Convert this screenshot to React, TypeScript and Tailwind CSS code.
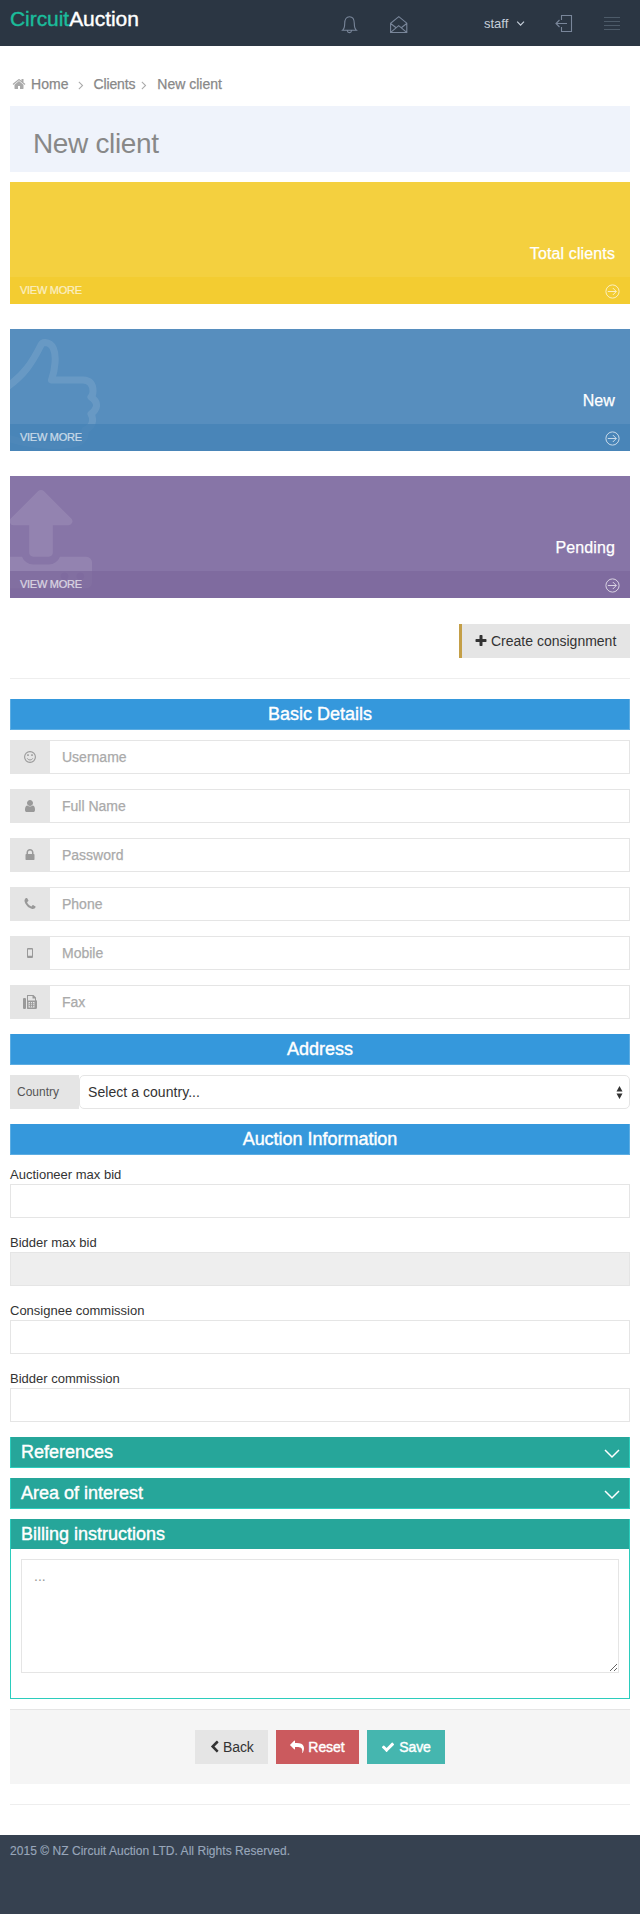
import type { ReactNode } from "react";

const glyphs = {
  home: "M1472 992v480q0 26-19 45t-45 19h-384v-384h-256v384h-384q-26 0-45-19t-19-45v-480q0-1 .5-3t.5-3l575-474 575 474q1 2 1 6zm223-69l-62 74q-8 9-21 11h-3q-13 0-21-7l-692-577-692 577q-12 8-24 7-13-2-21-11l-62-74q-8-10-7-23.5t11-21.5l719-599q32-26 76-26t76 26l244 204v-195q0-14 9-23t23-9h192q14 0 23 9t9 23v408l219 182q10 8 11 21.5t-7 23.5z",
  user: "M1536 1399q0 109-62.5 187t-150.5 78h-854q-88 0-150.5-78t-62.5-187q0-85 8.5-160.5t31.5-152 58.5-131 94-89 134.5-34.5q131 128 313 128t313-128q76 0 134.5 34.5t94 89 58.5 131 31.5 152 8.5 160.5zm-256-887q0 159-112.5 271.5t-271.5 112.5-271.5-112.5-112.5-271.5 112.5-271.5 271.5-112.5 271.5 112.5 112.5 271.5z",
  lock: "M640 768h512v-192q0-106-75-181t-181-75-181 75-75 181v192zm832 96v576q0 40-28 68t-68 28h-960q-40 0-68-28t-28-68v-576q0-40 28-68t68-28h32v-192q0-184 132-316t316-132 316 132 132 316v192h32q40 0 68 28t28 68z",
  phone: "M1600 1240q0 27-10 70.5t-21 68.5q-21 50-122 106-94 51-186 51-27 0-53-3.5t-57.5-12.5-47-14.5-55.5-20.5-49-18q-98-35-175-83-127-79-264-216t-216-264q-48-77-83-175-3-9-18-49t-20.5-55.5-14.5-47-12.5-57.5-3.5-53q0-92 51-186 56-101 106-122 25-11 68.5-21t70.5-10q14 0 21 3 18 6 53 76 11 19 30 54t35 63.5 31 53.5q3 4 17.5 25t21.5 35.5 7 28.5q0 20-28.5 50t-62 55-62 53-28.5 46q0 9 5 22.5t8.5 20.5 14 24 11.5 19q76 137 174 235t235 174q2 1 19 11.5t24 14 20.5 8.5 22.5 5q18 0 46-28.5t53-62 55-62 50-28.5q14 0 28.5 7t35.5 21.5 25 17.5q25 15 53.5 31t63.5 35 54 30q70 35 76 53 3 7 3 21z",
  upload: "M1344 1472q0-26-19-45t-45-19-45 19-19 45 19 45 45 19 45-19 19-45zm256 0q0-26-19-45t-45-19-45 19-19 45 19 45 45 19 45-19 19-45zm128-224v320q0 40-28 68t-68 28h-1472q-40 0-68-28t-28-68v-320q0-40 28-68t68-28h427q21 56 70.5 92t110.5 36h256q61 0 110.5-36t70.5-92h427q40 0 68 28t28 68zm-325-648q-17 40-59 40h-256v448q0 26-19 45t-45 19h-256q-26 0-45-19t-19-45v-448h-256q-42 0-59-40-17-39 14-69l448-448q18-19 45-19t45 19l448 448q31 30 14 69z",
  check: "M1671 566q0 40-28 68l-724 724-136 136q-28 28-68 28t-68-28l-136-136-362-362q-28-28-28-68t28-68l136-136q28-28 68-28t68 28l294 295 656-657q28-28 68-28t68 28l136 136q28 28 28 68z",
  plus: "M1600 736v192q0 40-28 68t-68 28h-416v416q0 40-28 68t-68 28h-192q-40 0-68-28t-28-68v-416h-416q-40 0-68-28t-28-68v-192q0-40 28-68t68-28h416v-416q0-40 28-68t68-28h192q40 0 68 28t28 68v416h416q40 0 68 28t28 68z",
  share: "M1792 640q0 26-19 45l-512 512q-19 19-45 19t-45-19-19-45v-256h-224q-98 0-175.5 6t-154 21.5-133 42.5-105.5 69.5-80 101-48.5 138.5-17.5 181q0 55 5 123 0 6 2.5 23.5t2.5 26.5q0 15-8.5 25t-23.5 10q-16 0-28-17-7-9-13-22t-13.5-30-10.5-24q-127-285-127-451 0-199 53-333 162-403 875-403h224v-256q0-26 19-45t45-19 45 19l512 512q19 19 19 45z",
  left: "M1427 301l-531 531 531 531q19 19 19 45t-19 45l-166 166q-19 19-45 19t-45-19l-742-742q-19-19-19-45t19-45l742-742q19-19 45-19t45 19l166 166q19 19 19 45t-19 45z",
  angle: "M1171 960q0 13-10 23l-466 466q-10 10-23 10t-23-10l-50-50q-10-10-10-23t10-23l393-393-393-393q-10-10-10-23t10-23l50-50q10-10 23-10t23 10l466 466q10 10 10 23z",
};

function Glyph({ name, className }: { name: keyof typeof glyphs; className: string }) {
  return (
    <svg viewBox="0 0 1792 1792" fill="currentColor" className={className}>
      <path d={glyphs[name]} />
    </svg>
  );
}

function Header() {
  return (
    <header className="flex h-[46px] items-start bg-[#2b3643] pl-[10px]">
      <div className="mt-[7px] w-[329px] text-[21px] leading-6 tracking-[-0.05px] text-white [-webkit-text-stroke:0.4px_currentColor]">
        <span className="text-[#1bbc9b]">Circuit</span>Auction
      </div>
      <svg className="mt-[15px] h-[19px] w-[20px] text-[#79869a]" viewBox="0 0 20 19" fill="none" stroke="currentColor" strokeWidth="1.1">
        <path d="M3.5 15.3h14c-1.8-1.5-2.2-3-2.2-6.8C15.3 4.500 13.500 1.700 10.500 1.700S5.700 4.500 5.700 8.500c0 3.800-.4 5.300-2.200 6.800zM8.200 15.500c.2 1.400 1 2.100 2.200 2.100s2-.7 2.200-2.100" />
      </svg>
      <svg className="mt-[15px] ml-[30px] h-[19px] w-[20px] text-[#79869a]" viewBox="0 0 20 19" fill="none" stroke="currentColor" strokeWidth="1.100">
        <path d="M1.600 17.500V8.200L9.800 1.600l8 6.600v9.300zM1.700 8.500l5.100 4M17.700 8.500l-5.100 4M1.700 17.300l8-6.600 8 6.600" />
      </svg>
      <div className="mt-[14px] ml-[75px] w-[32px] text-[13px] leading-[20px] text-[#c6cfda]">staff</div>
      <svg className="mt-[20px] h-[7px] w-[9px] text-[#c6cfda]" viewBox="0 0 9 7" fill="none" stroke="currentColor" strokeWidth="1.200">
        <path d="M1.200 1.700l3.400 3.400L8 1.700" />
      </svg>
      <svg className="mt-[14px] mr-px ml-[29px] h-[19px] w-[19px] text-[#79869a]" viewBox="0 0 19 19" fill="none" stroke="currentColor" strokeWidth="1.100">
        <path d="M7.500 6V1.500h10v16h-10V13M13 9.500H2M5.500 6L2 9.500 5.500 13" />
      </svg>
      <svg className="mt-[16px] ml-[30px] h-[15px] w-[16px] text-[#4d5b69]" viewBox="0 0 16 15" stroke="currentColor">
        <path d="M0 1.500h16M0 5.500h16M0 9.500h16M0 13.500h16" />
      </svg>
    </header>
  );
}

function Thumb() {
  return (
    <svg className="absolute top-0 left-0 h-[122px] w-[100px] opacity-10" viewBox="0 0 100 122" fill="none" stroke="white" strokeWidth="7" strokeLinejoin="round">
      <path d="M-3 58C14 46 22 34 31 16Q32 13.500 35 13.500C43 14 46 22 45 34Q44.500 42 41.500 51H73Q83 51.500 83 62Q83 66 81 68Q87 72 86.500 77Q86 81 81 85Q83 88 82.500 92Q82 98 75 101Q76 108 71 112Q64 116.500 42 116.500Q18 116 -3 109" />
    </svg>
  );
}

function StatCard({ title, body, foot, art }: { title: string; body: string; foot: string; art?: ReactNode }) {
  return (
    <div className={`relative mb-[25px] flex h-[122px] flex-col overflow-hidden text-white ${body}`}>
      {art}
      <div className="mt-[62px] h-[33px] pr-[15px] text-right text-[16px] leading-5 tracking-[0.12px] [-webkit-text-stroke:0.25px_currentColor]">
        {title}
      </div>
      <div className={`relative flex h-[27px] items-center justify-between px-[10px] ${foot}`}>
        <span className="text-[11px] tracking-[-0.27px] opacity-70 [-webkit-text-stroke:0.2px_currentColor]">VIEW MORE</span>
        <svg className="mt-px h-[15px] w-[15px] opacity-70" viewBox="0 0 15 15" fill="none" stroke="currentColor" strokeWidth="1">
          <circle cx="7.500" cy="7.500" r="6.600" />
          <path d="M2.800 7.500h8.500M7.800 4l3.500 3.500L7.800 11" />
        </svg>
      </div>
    </div>
  );
}

function BlueBar({ children }: { children: ReactNode }) {
  return (
    <div className="mb-[10px] h-[31px] border border-t-0 border-[#5dade2] bg-[#3598dc] text-center text-[18px] leading-[30px] tracking-[-0.02px] text-white [-webkit-text-stroke:0.4px_currentColor]">
      {children}
    </div>
  );
}

function IconField({ icon, label }: { icon: ReactNode; label: string }) {
  return (
    <div className="mb-[15px] flex h-[34px]">
      <div className="flex w-[40px] items-center justify-center bg-[#e5e5e5] text-[#999]">{icon}</div>
      <input
        placeholder={label}
        className="min-w-0 flex-1 border border-l-0 border-[#e5e5e5] px-3 text-[14px] placeholder:text-[#aaa] placeholder:[-webkit-text-stroke:0.25px_#aaa]"
      />
    </div>
  );
}

function NumberField({ label, disabled }: { label: string; disabled?: boolean }) {
  return (
    <div className="mb-[15px]">
      <div className="h-[19px] text-[13px] leading-[19px]">{label}</div>
      <input
        aria-label={label}
        disabled={disabled}
        className="block h-[34px] w-full border border-[#e5e5e5] bg-white px-3 text-[14px] disabled:bg-[#eee]"
      />
    </div>
  );
}

function GreenBar({ children }: { children: string }) {
  return (
    <div className="mb-[10px] flex h-[31px] items-center justify-between border border-t-0 border-[#2bcdbd] bg-[#26a69a] px-[10px] text-[18px] leading-[30px] text-white [-webkit-text-stroke:0.4px_currentColor]">
      <span>{children}</span>
      <svg className="mt-[3px] mr-[-1px] h-[10px] w-[16px]" viewBox="0 0 16 10" fill="none" stroke="currentColor" strokeWidth="1.500">
        <path d="M1 1L8 8l7-7" />
      </svg>
    </div>
  );
}

function Smile() {
  return (
    <svg className="h-[12px] w-[12px]" viewBox="0 0 12 12" fill="none" stroke="currentColor">
      <circle cx="6" cy="6" r="5.400" strokeWidth="1.100" />
      <path d="M3.200 7.300Q4 9 6 9t2.800-1.700" />
      <path d="M4 3.200v1.700M8 3.200v1.700" strokeWidth="1.500" />
    </svg>
  );
}

function Mobile() {
  return (
    <svg className="h-[10px] w-[6px]" viewBox="0 0 6 10">
      <path fill="currentColor" fillRule="evenodd" d="M1 0h4q1 0 1 1v8q0 1-1 1H1Q0 10 0 9V1Q0 0 1 0zM1 1.500v6.300h4V1.500z" />
    </svg>
  );
}

function Fax() {
  return (
    <svg className="h-[14px] w-[14px]" viewBox="0 0 14 14">
      <rect x="0" y="3" width="3" height="11" rx="1" fill="currentColor" />
      <path fill="currentColor" fillRule="evenodd" d="M4 0h6.500L13 2.500V5q1 .3 1 1.300v6.200q0 1.500-1.500 1.500H4.500Q4 14 4 13zM5 1v4.500h7V3.500H9.500V1zM5.500 7v5.500h6V7z" />
      <path stroke="currentColor" strokeWidth=".9" d="M7.500 7v5.500M9.500 7v5.500M5.500 8.800h6M5.500 10.700h6" />
    </svg>
  );
}

export default function App() {
  return (
    <div className="flex h-[1914px] w-[640px] flex-col bg-white font-['Liberation_Sans',Arial,sans-serif] text-[#333]">
      <Header />
      <main className="flex-1 px-[10px]">
        <nav className="flex h-[60px] items-center pt-[17px] text-[14px] text-[#888] [-webkit-text-stroke:0.25px_currentColor]">
          <Glyph name="home" className="mt-[-2px] ml-[2px] h-[14px] w-[14px] text-[#aaa]" />
          <span className="ml-[5px] tracking-[0.05px]">Home</span>
          <Glyph name="angle" className="ml-[5px] h-[14px] w-[14px] text-[#aaa]" />
          <span className="ml-[6px] tracking-[-0.15px]">Clients</span>
          <Glyph name="angle" className="ml-[2px] h-[14px] w-[14px] text-[#aaa]" />
          <span className="ml-[6px]">New client</span>
        </nav>
        <h1 className="mb-[10px] h-[66px] bg-[#eff3fb] pt-[5px] pl-[23px] text-[28px] leading-[66px] tracking-[-0.35px] text-[#888]">New client</h1>

        <StatCard title="Total clients" body="bg-[#f4d03f]" foot="bg-[#f3cc31]" />
        <StatCard title="New" body="bg-[#578ebe]" foot="bg-[#4482b5]/75" art={<Thumb />} />
        <StatCard
          title="Pending"
          body="bg-[#8775a7]"
          foot="bg-[#7c689c]/75"
          art={<Glyph name="upload" className="absolute top-[10px] left-[-24px] h-[110px] w-[110px] opacity-10" />}
        />

        <div className="mt-[26px] flex justify-end">
          <button className="flex h-[34px] w-[171px] items-center border-l-[3px] border-[#c49f47] bg-[#e5e5e5] pl-[12px] text-[14px] whitespace-nowrap">
            <Glyph name="plus" className="mr-[3px] h-[14px] w-[14px]" />
            Create consignment
          </button>
        </div>
        <hr className="mt-[20px] mb-[20px] border-[#eee]" />

        <BlueBar>Basic Details</BlueBar>
        <IconField icon={<Smile />} label="Username" />
        <IconField icon={<Glyph name="user" className="h-[14px] w-[14px]" />} label="Full Name" />
        <IconField icon={<Glyph name="lock" className="h-[14px] w-[14px]" />} label="Password" />
        <IconField icon={<Glyph name="phone" className="h-[14px] w-[14px]" />} label="Phone" />
        <IconField icon={<Mobile />} label="Mobile" />
        <IconField icon={<Fax />} label="Fax" />

        <BlueBar>Address</BlueBar>
        <div className="mb-[15px] flex h-[34px]">
          <div className="flex w-[69px] items-center bg-[#e5e5e5] pl-[7px] text-[12px] text-[#555]">Country</div>
          <div className="flex flex-1 items-center justify-between rounded-[5px] border border-[#e5e5e5] pr-[6px] pl-[8px] text-[14px]">
            <span className="tracking-[0.05px]">Select a country...</span>
            <svg className="h-[13px] w-[7px]" viewBox="0 0 7 13" fill="currentColor">
              <path d="M3.500 0L6.500 5.500h-6zM3.500 13L6.500 7.500h-6z" />
            </svg>
          </div>
        </div>

        <BlueBar>Auction Information</BlueBar>
        <NumberField label="Auctioneer max bid" />
        <NumberField label="Bidder max bid" disabled />
        <NumberField label="Consignee commission" />
        <NumberField label="Bidder commission" />

        <GreenBar>References</GreenBar>
        <GreenBar>Area of interest</GreenBar>
        <section className="mb-[10px] h-[180px] border border-t-0 border-[#2bcdbd]">
          <h2 className="h-[30px] bg-[#26a69a] px-[10px] text-[18px] leading-[30px] text-white [-webkit-text-stroke:0.4px_currentColor]">
            Billing instructions
          </h2>
          <div className="px-[10px] pt-[10px]">
            <textarea
              placeholder="..."
              className="block h-[114px] w-full border border-[#e5e5e5] px-3 py-[6px] text-[14px] leading-5 placeholder:text-[#999]"
            />
          </div>
        </section>

        <div className="flex h-[75px] justify-center gap-[8px] border-t border-[#e5e5e5] bg-[#f5f5f5] pt-[20px] text-[14px]">
          <button className="flex h-[34px] w-[73px] items-center gap-[2px] bg-[#e5e5e5] pl-[13px] tracking-[-0.1px]">
            <Glyph name="left" className="h-[14px] w-[13px]" />
            Back
          </button>
          <button className="flex h-[34px] w-[83px] items-center justify-center gap-[4px] bg-[#cb5a5e] tracking-[-0.050px] text-white [-webkit-text-stroke:0.400px_currentColor]">
            <Glyph name="share" className="h-[14px] w-[14px] -scale-x-100" />
            Reset
          </button>
          <button className="flex h-[34px] w-[78px] items-center justify-center gap-[4px] bg-[#45b6af] tracking-[-0.050px] text-white [-webkit-text-stroke:0.400px_currentColor]">
            <Glyph name="check" className="h-[14px] w-[14px]" />
            Save
          </button>
        </div>
        <hr className="mt-[20px] border-[#eee]" />
      </main>
      <footer className="h-[79px] bg-[#364150] px-[10px] pt-[8px] text-[12px] leading-[16px] tracking-[0.04px] text-[#98a6ba] [-webkit-text-stroke:0.15px_currentColor]">
        2015 © NZ Circuit Auction LTD. All Rights Reserved.
      </footer>
    </div>
  );
}
